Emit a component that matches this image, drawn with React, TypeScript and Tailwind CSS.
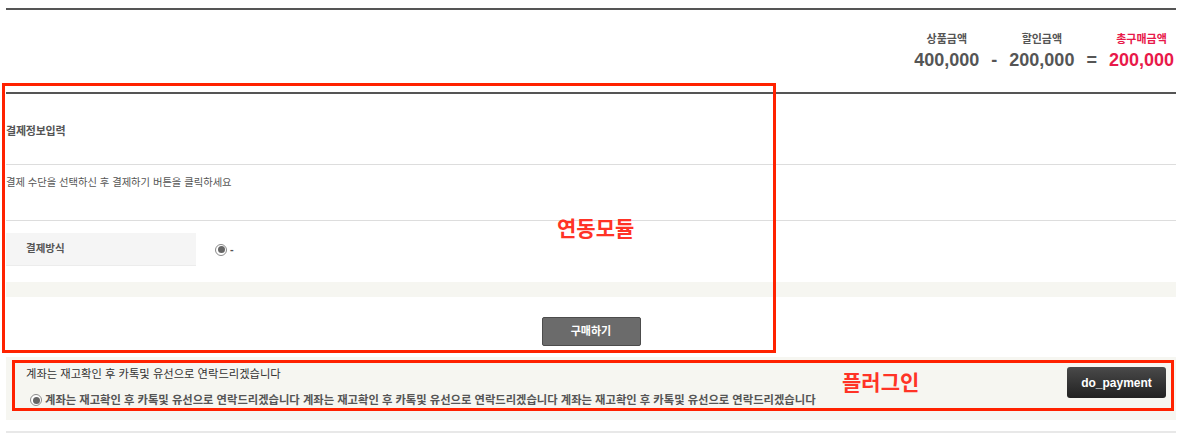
import React from "react";

function Radio() {
  return (
    <span className="inline-flex h-[12px] w-[12px] shrink-0 items-center justify-center rounded-full border border-[#8a8a8a] bg-white">
      <span className="h-[7px] w-[7px] rounded-full bg-[#666]" />
    </span>
  );
}

const notice = "계좌는 재고확인 후 카톡및 유선으로 연락드리겠습니다";

export default function App(): React.ReactElement {
  return (
    <div className="relative h-[442px] w-[1180px] overflow-hidden bg-white font-['Liberation_Sans','Noto_Sans_CJK_KR',sans-serif] text-[#555]">
      <div className="ml-[6px] w-[1170px] pt-[8px]">
        <div className="border-t-2 border-[#555]" />

        {/* price summary */}
        <div className="flex h-[82px] items-end justify-end pb-[22px] pr-[2px]">
          <div className="flex flex-col items-center">
            <span className="text-[11px] font-bold leading-[14px]">상품금액</span>
            <span className="mt-[4px] text-[18px] font-bold leading-[20px]">400,000</span>
          </div>
          <span className="mx-[12px] text-[18px] font-bold leading-[20px]">-</span>
          <div className="flex flex-col items-center">
            <span className="text-[11px] font-bold leading-[14px]">할인금액</span>
            <span className="mt-[4px] text-[18px] font-bold leading-[20px]">200,000</span>
          </div>
          <span className="mx-[12px] text-[18px] font-bold leading-[20px]">=</span>
          <div className="flex flex-col items-center text-[#e8194a]">
            <span className="text-[11px] font-bold leading-[14px]">총구매금액</span>
            <span className="mt-[4px] text-[18px] font-bold leading-[20px]">200,000</span>
          </div>
        </div>
        <div className="border-t-2 border-[#555]" />

        {/* payment info */}
        <div className="h-[70px] pt-[31px] text-[11px] font-bold leading-[12px] tracking-[-0.02em]">
          결제정보입력
        </div>
        <div className="border-t border-[#ddd]" />
        <div className="h-[55px] pt-[12px] text-[10.3px] leading-[12px]">
          결제 수단을 선택하신 후 결제하기 버튼을 클릭하세요
        </div>
        <div className="border-t border-[#ddd]" />

        <div className="mt-[12px] flex h-[33px] items-center">
          <div className="flex h-full w-[190px] items-center border-b border-[#ececec] bg-[#f5f5f5] pl-[20px] text-[10.5px] font-bold">
            결제방식
          </div>
          <div className="ml-[19px] flex items-center gap-[3px] text-[11px] font-bold">
            <Radio />
            <span>-</span>
          </div>
        </div>

        <div className="mt-[16px] h-[15px] bg-[#f6f6f1]" />

        <div className="mt-[20px] flex justify-center">
          <button className="h-[29px] w-[99px] rounded-[2px] border border-[#4c4c4c] bg-[#6b6b6b] text-[11px] font-bold text-white">
            구매하기
          </button>
        </div>

        {/* plugin */}
        <div className="mt-[11px] flex h-[63px] justify-between bg-[#f6f6f1]">
          <div className="pl-[20px] pt-[10px]">
            <div className="text-[11.3px] leading-[14px] text-[#333]">{notice}</div>
            <div className="ml-[4px] mt-[12px] flex items-center gap-[3px] text-[11.3px] font-bold leading-[14px] text-[#555]">
              <Radio />
              <span>
                {notice} {notice} {notice}
              </span>
            </div>
          </div>
          <button className="mr-[10px] mt-[10px] h-[31px] w-[99px] rounded-[3px] bg-gradient-to-b from-[#4a4a4a] to-[#222] text-[12px] font-bold text-white">
            do_payment
          </button>
        </div>

        <div className="mt-[11px] border-t-2 border-[#e8e8e8]" />
      </div>

      {/* annotations */}
      <div className="absolute left-[2px] top-[83px] h-[270px] w-[774px] border-[3px] border-[#ff2200]" />
      <div className="absolute left-[12px] top-[360px] h-[51px] w-[1162px] border-[3px] border-[#ff2200]" />
      <span className="absolute left-[557px] top-[218px] text-[21px] font-bold leading-none text-[#ff3326]">
        연동모듈
      </span>
      <span className="absolute left-[842px] top-[372px] text-[21px] font-bold leading-none text-[#ff3326]">
        플러그인
      </span>
    </div>
  );
}
